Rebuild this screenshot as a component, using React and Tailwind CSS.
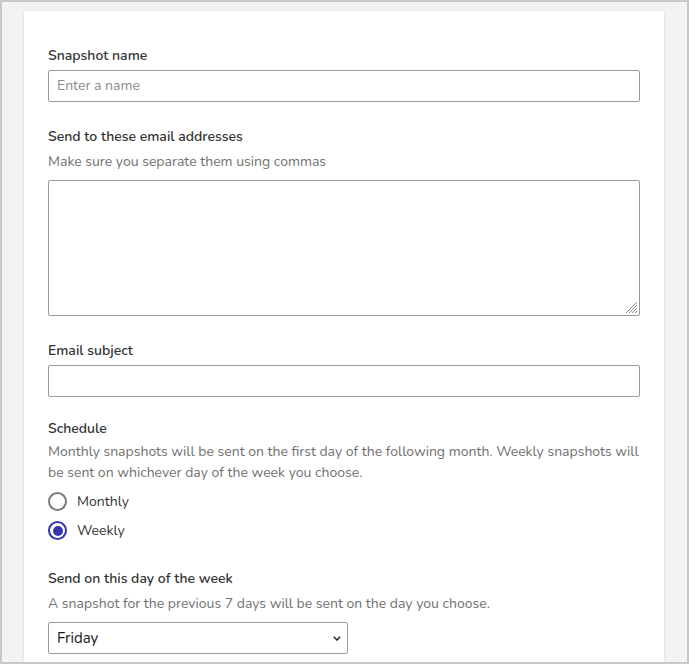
import React from "react";

const font = { fontFamily: '"Nunito", "Lato", "Noto Sans", sans-serif' };

function Label({ children }) {
  return <div className="text-[14px] font-semibold leading-[20px] text-[#333]">{children}</div>;
}
function Help({ children }) {
  return <div className="text-[14px] leading-[21px] text-[#707070]">{children}</div>;
}

function Radio({ checked, label }) {
  return (
    <label className="flex items-center gap-[10px] h-[29px]">
      <span
        className={
          "flex items-center justify-center w-[19px] h-[19px] rounded-full border-2 " +
          (checked ? "border-[#3535b0]" : "border-[#7a7a7a]")
        }
      >
        {checked && <span className="w-[10px] h-[10px] rounded-full bg-[#3535b0]" />}
      </span>
      <span className="text-[14px] text-[#333]">{label}</span>
    </label>
  );
}

export default function App() {
  return (
    <div className="w-[689px] h-[664px] border-2 border-[#c8c8c8] bg-[#f3f3f3] overflow-hidden" style={font}>
      <div className="ml-[22px] mt-[9px] w-[640px] h-[700px] bg-white shadow-[0_0_3px_rgba(0,0,0,0.12)] px-[24px] pt-[35px]">
        <Label>Snapshot name</Label>
        <div className="mt-[4px] h-[32px] border border-[#9a9a9a] rounded-[2px] flex items-center px-[8px] pb-[1px] text-[14px] text-[#8a8a8a]">
          Enter a name
        </div>

        <div className="mt-[25px]">
          <Label>Send to these email addresses</Label>
        </div>
        <div className="mt-[4px]"><Help>Make sure you separate them using commas</Help></div>
        <div className="relative mt-[8px] h-[136px] border border-[#9a9a9a] rounded-[2px]">
          <svg className="absolute right-[1px] bottom-[1px]" width="14" height="14" viewBox="0 0 14 14">
            <g stroke="#8a8a8a" strokeWidth="1">
              <line x1="13" y1="2" x2="2" y2="13" />
              <line x1="13" y1="5" x2="5" y2="13" />
              <line x1="13" y1="8" x2="8" y2="13" />
              <line x1="13" y1="11" x2="11" y2="13" />
            </g>
          </svg>
        </div>

        <div className="mt-[25px]"><Label>Email subject</Label></div>
        <div className="mt-[4px] h-[32px] border border-[#9a9a9a] rounded-[2px]" />

        <div className="mt-[22px]"><Label>Schedule</Label></div>
        <div className="mt-[2px]">
          <Help>
            Monthly snapshots will be sent on the first day of the following month. Weekly snapshots will be sent on whichever day of the week you choose.
          </Help>
        </div>
        <div className="mt-[4px] flex flex-col">
          <Radio label="Monthly" />
          <Radio checked label="Weekly" />
        </div>

        <div className="mt-[24px]"><Label>Send on this day of the week</Label></div>
        <div className="mt-[4px]"><Help>A snapshot for the previous 7 days will be sent on the day you choose.</Help></div>
        <div className="mt-[8px] w-[300px] h-[32px] border border-[#9a9a9a] rounded-[2px] flex items-center justify-between pl-[8px] pr-[6px] text-[15px] text-[#1a1a1a]">
          <span>Friday</span>
          <svg width="8" height="5" viewBox="0 0 8 5">
            <path d="M0.8 0.8 L4 4 L7.2 0.8" fill="none" stroke="#222" strokeWidth="1.5" />
          </svg>
        </div>
      </div>
    </div>
  );
}
